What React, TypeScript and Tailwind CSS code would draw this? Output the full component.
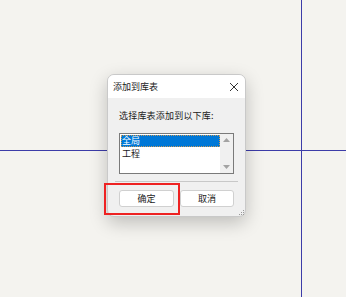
import React from "react";

const cjk = { fontFamily: '"Noto Sans CJK SC", "Noto Sans", sans-serif' };

const App: React.FC = () => {
  return (
    <div className="relative w-[346px] h-[297px] overflow-hidden bg-[#f4f3ef]" style={cjk}>
      {/* canvas crosshair */}
      <div className="absolute left-0 right-0 top-[150px] h-px bg-[#3c3ca8]" />
      <div className="absolute top-0 bottom-0 left-[301px] w-px bg-[#3c3ca8]" />

      <div className="relative pt-[74px] pl-[107px]">
        <div className="w-[139px] h-[143px] rounded-[7px] border border-[#c9c9c9] bg-[#f0f0f0] shadow-[0_6px_18px_rgba(0,0,0,0.22)] overflow-hidden flex flex-col">
          {/* title bar */}
          <div className="h-[23px] bg-white flex items-center justify-between pl-[5px] pr-[6px]">
            <span className="text-[9px] leading-none text-[#1a1a1a]">添加到库表</span>
            <svg width="10" height="10" viewBox="0 0 10 10" className="text-[#333]">
              <path d="M1 1 L9 9 M9 1 L1 9" stroke="currentColor" strokeWidth="1" />
            </svg>
          </div>

          {/* body */}
          <div className="flex-1 flex flex-col px-[11px] pt-[13px]">
            <div className="text-[9px] leading-none text-[#1a1a1a] tracking-[0.2px]">选择库表添加到以下库:</div>

            <div className="mt-[13px] h-[41px] border border-[#7a7a7a] bg-white flex">
              <div className="flex-1 pt-px pl-px">
                <div className="h-[12px] bg-[#0078d7] text-white text-[9px] leading-[12px] pl-[1px] outline-dotted outline-1 outline-[#c89a5a] -outline-offset-1">全局</div>
                <div className="h-[13px] text-[9px] leading-[13px] text-[#1a1a1a] pl-[1px]">工程</div>
              </div>
              <div className="w-[13px] bg-[#f0f0f0] flex flex-col items-center justify-between py-[4px]">
                <svg width="7" height="4" viewBox="0 0 7 4"><path d="M0 4 L3.5 0 L7 4 Z" fill="#a3a3a3" /></svg>
                <svg width="7" height="4" viewBox="0 0 7 4"><path d="M0 0 L3.5 4 L7 0 Z" fill="#a3a3a3" /></svg>
              </div>
            </div>

            <div className="mt-[7px] -mx-[4px] h-px bg-[#c8c8c8]" />

            <div className="mt-[8px] flex justify-between">
              <button className="w-[55px] h-[17px] rounded-[3px] border border-[#d0d0d0] bg-white text-[9px] leading-none text-[#1a1a1a]">确定</button>
              <button className="w-[54px] h-[17px] rounded-[3px] border border-[#d0d0d0] bg-white text-[9px] leading-none text-[#1a1a1a]">取消</button>
            </div>
          </div>
        </div>

        {/* resize grip */}
        <svg width="6" height="6" viewBox="0 0 6 6" className="absolute left-[239px] top-[210px]">
          <rect x="4" y="0" width="1" height="1" fill="#999" />
          <rect x="2" y="2" width="1" height="1" fill="#999" />
          <rect x="4" y="2" width="1" height="1" fill="#999" />
          <rect x="0" y="4" width="1" height="1" fill="#999" />
          <rect x="2" y="4" width="1" height="1" fill="#999" />
          <rect x="4" y="4" width="1" height="1" fill="#999" />
        </svg>

        {/* highlight annotation */}
        <div className="absolute left-[104px] top-[183px] w-[76px] h-[32px] border-2 border-[#ee2222]" />
      </div>
    </div>
  );
};

export default App;
